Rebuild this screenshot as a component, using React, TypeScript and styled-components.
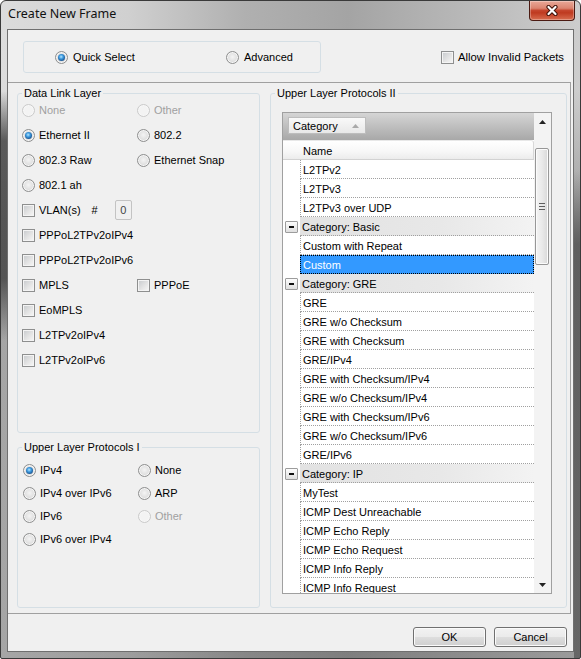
import React from "react";
import styled, { createGlobalStyle } from "styled-components";

const Global = createGlobalStyle`
  html, body { margin: 0; padding: 0; background: #fff; }
  body {
    width: 581px; height: 659px; overflow: hidden;
    font-family: "Liberation Sans", Arial, sans-serif;
    font-size: 11px; color: #000;
  }
  * { box-sizing: border-box; }
`;

const Window = styled.div`
  width: 581px;
  height: 659px;
  display: flex;
  flex-direction: column;
  border: 1px solid #3a3a3a;
  border-radius: 6px 6px 2px 2px;
  overflow: hidden;
  background:
    linear-gradient(to bottom, rgba(70,70,70,0) 0%, rgba(70,70,70,0.85) 20%, rgba(70,70,70,0.85) 75%, rgba(70,70,70,0) 100%) 0 90px / 6px 250px no-repeat,
    linear-gradient(to bottom, rgba(70,70,70,0) 0%, rgba(80,80,80,0.8) 15%, rgba(80,80,80,0.7) 100%) right 0 top 170px / 6px 489px no-repeat,
    linear-gradient(to bottom, rgba(40,40,40,0) 0px, rgba(40,40,40,0) 90px, rgba(40,40,40,0.3) 230px, rgba(40,40,40,0.3) 659px),
    linear-gradient(to right, #dcdcdc 0%, #d0d0d0 22%, #b0b0b0 42%, #a4a4a4 60%, #b8b8b8 80%, #cdcdcd 100%);
`;

const TitleBar = styled.div`
  height: 28px;
  flex: none;
  display: flex;
  align-items: flex-start;
  justify-content: space-between;
  padding: 0 5px 0 7px;
`;

const Title = styled.div`
  font-family: "Noto Sans", "Open Sans", sans-serif;
  font-size: 12.5px;
  line-height: 18px;
  padding-top: 4px;
  color: #111;
`;

const CloseButton = styled.div`
  width: 46px;
  height: 20px;
  border: 1px solid #4b1a12;
  border-top: none;
  border-radius: 0 0 4px 4px;
  background: linear-gradient(#e9a898 0%, #db8470 38%, #c5452d 50%, #bf3a20 62%, #d86d50 100%);
  box-shadow: inset 0 0 0 1px rgba(255, 255, 255, 0.3);
  display: flex;
  align-items: center;
  justify-content: center;
`;

const Client = styled.div`
  flex: 1;
  margin: 0 6px 6px 6px;
  border: 1px solid #6f6f6f;
  background: #f0f0f0;
  display: flex;
  flex-direction: column;
`;

const TopBar = styled.div`
  height: 52px;
  flex: none;
  display: flex;
  align-items: center;
  padding: 2px 9px 0 15px;
`;

const ModeBox = styled.div`
  width: 298px;
  height: 32px;
  border: 1px solid #d5dfe5;
  border-radius: 3px;
  display: flex;
  align-items: center;
  padding-left: 31px;
`;

const ModeItem = styled.div<{ $w?: number }>`
  width: ${(p) => (p.$w ? `${p.$w}px` : "auto")};
  display: flex;
  align-items: center;
  gap: 5px;
`;

const AllowItem = styled.div`
  margin-left: auto;
  display: flex;
  align-items: center;
  gap: 4px;
  font-size: 11.3px;
`;

const Panel = styled.div`
  height: 532px;
  flex: none;
  margin-right: 2px;
  border-top: 1px solid #a0a0a0;
  border-right: 1px solid #a0a0a0;
  border-bottom: 1px solid #a0a0a0;
  display: flex;
  gap: 10px;
  padding: 4px 3px 5px 9px;
`;

const LeftCol = styled.div`
  width: 243px;
  display: flex;
  flex-direction: column;
  gap: 8px;
`;

const GroupBox = styled.fieldset<{ $h: number; $w?: number }>`
  margin: 0;
  padding: 0;
  min-width: 0;
  height: ${(p) => p.$h}px;
  width: ${(p) => (p.$w ? `${p.$w}px` : "auto")};
  border: 1px solid #d5dfe5;
  border-radius: 3px;
`;

const Legend = styled.legend`
  padding: 0 2px;
  margin-left: 4px;
  line-height: 13px;
  font-size: 11px;
  color: #000;
`;

const Options = styled.div<{ $gap: number; $top: number; $left: number }>`
  display: flex;
  flex-direction: column;
  gap: ${(p) => p.$gap}px;
  padding: ${(p) => p.$top}px 0 0 ${(p) => p.$left}px;
`;

const OptionRow = styled.div`
  height: 20px;
  display: grid;
  grid-template-columns: 115px auto;
  align-items: center;
`;

const Option = styled.label<{ $disabled?: boolean }>`
  display: flex;
  align-items: center;
  gap: 4px;
  color: ${(p) => (p.$disabled ? "#a0a0a0" : "#000")};
  white-space: nowrap;
`;

const RadioCircle = styled.span<{ $checked?: boolean; $disabled?: boolean }>`
  width: 13px;
  height: 13px;
  flex: none;
  border-radius: 50%;
  border: 1px solid ${(p) => (p.$disabled ? "#cacaca" : "#8e8f8f")};
  background: ${(p) =>
    p.$disabled
      ? "#f3f3f3"
      : "radial-gradient(circle at 50% 45%, #f4f4f4 0%, #e2e2e2 50%, #cdcdcd 100%)"};
  box-shadow: inset 0 0 0 1px ${(p) => (p.$disabled ? "#f7f7f7" : "#f6f6f6")};
  display: flex;
  align-items: center;
  justify-content: center;
  &::after {
    content: "";
    display: ${(p) => (p.$checked ? "block" : "none")};
    width: 7px;
    height: 7px;
    border-radius: 50%;
    background: radial-gradient(circle at 45% 40%, #b6e6ff 0%, #3f9ce0 35%, #1d5a98 70%, #133c6a 100%);
  }
`;

const CheckBox = styled.span`
  width: 13px;
  height: 13px;
  flex: none;
  border: 1px solid #8e8f8f;
  background: linear-gradient(135deg, #c6c9cc 0%, #e4e4e4 55%, #f8f8f8 100%);
  box-shadow: inset 0 0 0 1px #f4f4f4;
`;

const Hash = styled.span`
  margin-left: 7px;
`;

const NumBox = styled.span`
  width: 17px;
  height: 20px;
  margin-left: 13px;
  border: 1px solid #c3c3c3;
  border-radius: 2px;
  background: #f0f0f0;
  color: #444;
  display: flex;
  align-items: center;
  justify-content: center;
`;

const GridBox = styled.div`
  width: 270px;
  height: 482px;
  margin: 12px 0 0 11px;
  border: 1px solid #a0a0a0;
  background: #fff;
  display: flex;
`;

const GridMain = styled.div`
  flex: 1;
  min-width: 0;
  display: flex;
  flex-direction: column;
  overflow: hidden;
`;

const GroupPanel = styled.div`
  height: 27px;
  flex: none;
  padding: 4px 0 0 5px;
  background: linear-gradient(#d5d5d5, #a8a8a8);
`;

const GroupChip = styled.div`
  width: 78px;
  height: 17px;
  border: 1px solid #bdbdbd;
  background: linear-gradient(#f9f9f9, #e8e8e8);
  display: flex;
  align-items: center;
  padding: 0 6px 0 4px;
  justify-content: space-between;
`;

const ColumnHeader = styled.div`
  height: 20px;
  flex: none;
  display: flex;
  align-items: center;
  padding: 1px 0 0 20px;
  background: linear-gradient(#ffffff 0%, #f7f7f7 60%, #ececec 100%);
  border-top: 1px solid #e8e8e8;
  border-bottom: 1px solid #d2d2d2;
  border-right: 1px solid #d8d8d8;
  border-radius: 0 3px 0 0;
`;

const Rows = styled.div`
  flex: 1;
  overflow: hidden;
`;

const Row = styled.div`
  height: 19px;
  display: flex;
`;

const Indent = styled.div`
  width: 17px;
  flex: none;
  display: flex;
  align-items: flex-start;
`;

const Cell = styled.div<{ $selected?: boolean }>`
  flex: 1;
  min-width: 0;
  border-left: 1px dotted #a0a0a0;
  border-bottom: 1px dotted #a0a0a0;
  padding: 2px 0 0 2px;
  line-height: 16px;
  white-space: nowrap;
  background: ${(p) => (p.$selected ? "#3399ff" : "#fff")};
  color: ${(p) => (p.$selected ? "#fff" : "#000")};
  outline: ${(p) => (p.$selected ? "1px dotted #000" : "none")};
  outline-offset: -1px;
`;

const CategoryCell = styled.div`
  flex: 1;
  min-width: 0;
  border-bottom: 1px dotted #a0a0a0;
  padding: 2px 0 0 2px;
  line-height: 16px;
  white-space: nowrap;
  background: linear-gradient(to right, #e2e2e2 0%, #e8e8e8 60%, #f3f3f3 100%);
`;

const ExpandButton = styled.span`
  width: 13px;
  height: 12px;
  margin: 4px 0 0 2px;
  border: 1px solid #9c9c9c;
  border-radius: 1px;
  background: linear-gradient(#fdfdfd, #dfdfdf);
  display: flex;
  align-items: center;
  justify-content: center;
  &::before {
    content: "";
    width: 5px;
    height: 2px;
    background: #111;
  }
`;

const ScrollBar = styled.div`
  width: 17px;
  flex: none;
  display: flex;
  flex-direction: column;
  background: #f3f3f3;
`;

const ArrowButton = styled.div`
  height: 17px;
  flex: none;
  display: flex;
  align-items: center;
  justify-content: center;
`;

const Thumb = styled.div`
  width: 14px;
  height: 117px;
  margin: 18px 0 0 1px;
  border: 1px solid #979797;
  border-radius: 2px;
  background: linear-gradient(to right, #f4f4f4 0%, #e9e9e9 50%, #d8d8d8 100%);
  box-shadow: inset 0 0 0 1px #fbfbfb;
  display: flex;
  flex-direction: column;
  align-items: center;
  justify-content: center;
  gap: 2px;
`;

const GripLine = styled.span`
  width: 6px;
  height: 1px;
  background: #5e5e5e;
`;

const TrackFill = styled.div`
  flex: 1;
`;

const ButtonBar = styled.div`
  flex: 1;
  display: flex;
  justify-content: flex-end;
  align-items: flex-start;
  gap: 8px;
  padding: 13px 6px 0 0;
`;

const DialogButton = styled.button`
  width: 73px;
  height: 20px;
  padding: 0;
  border: 1px solid #707070;
  border-radius: 3px;
  background: linear-gradient(#f2f2f2 0%, #ebebeb 48%, #dddddd 52%, #cfcfcf 100%);
  box-shadow: inset 0 0 0 1px #fbfbfb;
  font-family: "Liberation Sans", Arial, sans-serif;
  font-size: 11px;
  color: #000;
`;

const Radio = ({ label, checked, disabled }: { label: string; checked?: boolean; disabled?: boolean }) => (
  <Option $disabled={disabled}>
    <RadioCircle $checked={checked} $disabled={disabled} />
    {label}
  </Option>
);

const Check = ({ label }: { label: string }) => (
  <Option>
    <CheckBox />
    {label}
  </Option>
);

type GridRow = { kind: "cat" | "item"; label: string; selected?: boolean };

const gridRows: GridRow[] = [
  { kind: "item", label: "L2TPv2" },
  { kind: "item", label: "L2TPv3" },
  { kind: "item", label: "L2TPv3 over UDP" },
  { kind: "cat", label: "Category: Basic" },
  { kind: "item", label: "Custom with Repeat" },
  { kind: "item", label: "Custom", selected: true },
  { kind: "cat", label: "Category: GRE" },
  { kind: "item", label: "GRE" },
  { kind: "item", label: "GRE w/o Checksum" },
  { kind: "item", label: "GRE with Checksum" },
  { kind: "item", label: "GRE/IPv4" },
  { kind: "item", label: "GRE with Checksum/IPv4" },
  { kind: "item", label: "GRE w/o Checksum/IPv4" },
  { kind: "item", label: "GRE with Checksum/IPv6" },
  { kind: "item", label: "GRE w/o Checksum/IPv6" },
  { kind: "item", label: "GRE/IPv6" },
  { kind: "cat", label: "Category: IP" },
  { kind: "item", label: "MyTest" },
  { kind: "item", label: "ICMP Dest Unreachable" },
  { kind: "item", label: "ICMP Echo Reply" },
  { kind: "item", label: "ICMP Echo Request" },
  { kind: "item", label: "ICMP Info Reply" },
  { kind: "item", label: "ICMP Info Request" },
];

const CloseGlyph = () => (
  <svg width="14" height="11" viewBox="0 0 14 11">
    <path d="M3.5 2 L10.5 9 M10.5 2 L3.5 9" stroke="#3f1108" strokeWidth="4.2" strokeLinecap="round" />
    <path d="M3.5 2 L10.5 9 M10.5 2 L3.5 9" stroke="#ffffff" strokeWidth="2.2" strokeLinecap="round" />
  </svg>
);

const SortGlyph = () => (
  <svg width="7" height="4" viewBox="0 0 7 4">
    <path d="M0 4 L3.5 0 L7 4 Z" fill="#a9a9a9" />
  </svg>
);

const ArrowGlyph = ({ down }: { down?: boolean }) => (
  <svg width="7" height="4" viewBox="0 0 7 4">
    <path d={down ? "M0 0 L7 0 L3.5 4 Z" : "M0 4 L3.5 0 L7 4 Z"} fill="#222" />
  </svg>
);

export default function App() {
  return (
    <>
      <Global />
      <Window>
        <TitleBar>
          <Title>Create New Frame</Title>
          <CloseButton>
            <CloseGlyph />
          </CloseButton>
        </TitleBar>
        <Client>
          <TopBar>
            <ModeBox>
              <ModeItem $w={171}>
                <RadioCircle $checked />
                Quick Select
              </ModeItem>
              <ModeItem>
                <RadioCircle />
                Advanced
              </ModeItem>
            </ModeBox>
            <AllowItem>
              <CheckBox />
              Allow Invalid Packets
            </AllowItem>
          </TopBar>
          <Panel>
            <LeftCol>
              <GroupBox $h={346}>
                <Legend>Data Link Layer</Legend>
                <Options $gap={5} $top={0} $left={4}>
                  <OptionRow>
                    <Radio label="None" disabled />
                    <Radio label="Other" disabled />
                  </OptionRow>
                  <OptionRow>
                    <Radio label="Ethernet II" checked />
                    <Radio label="802.2" />
                  </OptionRow>
                  <OptionRow>
                    <Radio label="802.3 Raw" />
                    <Radio label="Ethernet Snap" />
                  </OptionRow>
                  <OptionRow>
                    <Radio label="802.1 ah" />
                  </OptionRow>
                  <OptionRow>
                    <Option>
                      <CheckBox />
                      VLAN(s)
                      <Hash>#</Hash>
                      <NumBox>0</NumBox>
                    </Option>
                  </OptionRow>
                  <OptionRow>
                    <Check label="PPPoL2TPv2oIPv4" />
                  </OptionRow>
                  <OptionRow>
                    <Check label="PPPoL2TPv2oIPv6" />
                  </OptionRow>
                  <OptionRow>
                    <Check label="MPLS" />
                    <Check label="PPPoE" />
                  </OptionRow>
                  <OptionRow>
                    <Check label="EoMPLS" />
                  </OptionRow>
                  <OptionRow>
                    <Check label="L2TPv2oIPv4" />
                  </OptionRow>
                  <OptionRow>
                    <Check label="L2TPv2oIPv6" />
                  </OptionRow>
                </Options>
              </GroupBox>
              <GroupBox $h={167}>
                <Legend>Upper Layer Protocols I</Legend>
                <Options $gap={3} $top={6} $left={5}>
                  <OptionRow>
                    <Radio label="IPv4" checked />
                    <Radio label="None" />
                  </OptionRow>
                  <OptionRow>
                    <Radio label="IPv4 over IPv6" />
                    <Radio label="ARP" />
                  </OptionRow>
                  <OptionRow>
                    <Radio label="IPv6" />
                    <Radio label="Other" disabled />
                  </OptionRow>
                  <OptionRow>
                    <Radio label="IPv6 over IPv4" />
                  </OptionRow>
                </Options>
              </GroupBox>
            </LeftCol>
            <GroupBox $h={521} $w={297}>
              <Legend>Upper Layer Protocols II</Legend>
              <GridBox>
                <GridMain>
                  <GroupPanel>
                    <GroupChip>
                      Category
                      <SortGlyph />
                    </GroupChip>
                  </GroupPanel>
                  <ColumnHeader>Name</ColumnHeader>
                  <Rows>
                    {gridRows.map((r, i) =>
                      r.kind === "cat" ? (
                        <Row key={i}>
                          <Indent>
                            <ExpandButton />
                          </Indent>
                          <CategoryCell>{r.label}</CategoryCell>
                        </Row>
                      ) : (
                        <Row key={i}>
                          <Indent />
                          <Cell $selected={r.selected}>{r.label}</Cell>
                        </Row>
                      )
                    )}
                  </Rows>
                </GridMain>
                <ScrollBar>
                  <ArrowButton>
                    <ArrowGlyph />
                  </ArrowButton>
                  <Thumb>
                    <GripLine />
                    <GripLine />
                    <GripLine />
                  </Thumb>
                  <TrackFill />
                  <ArrowButton>
                    <ArrowGlyph down />
                  </ArrowButton>
                </ScrollBar>
              </GridBox>
            </GroupBox>
          </Panel>
          <ButtonBar>
            <DialogButton>OK</DialogButton>
            <DialogButton>Cancel</DialogButton>
          </ButtonBar>
        </Client>
      </Window>
    </>
  );
}
